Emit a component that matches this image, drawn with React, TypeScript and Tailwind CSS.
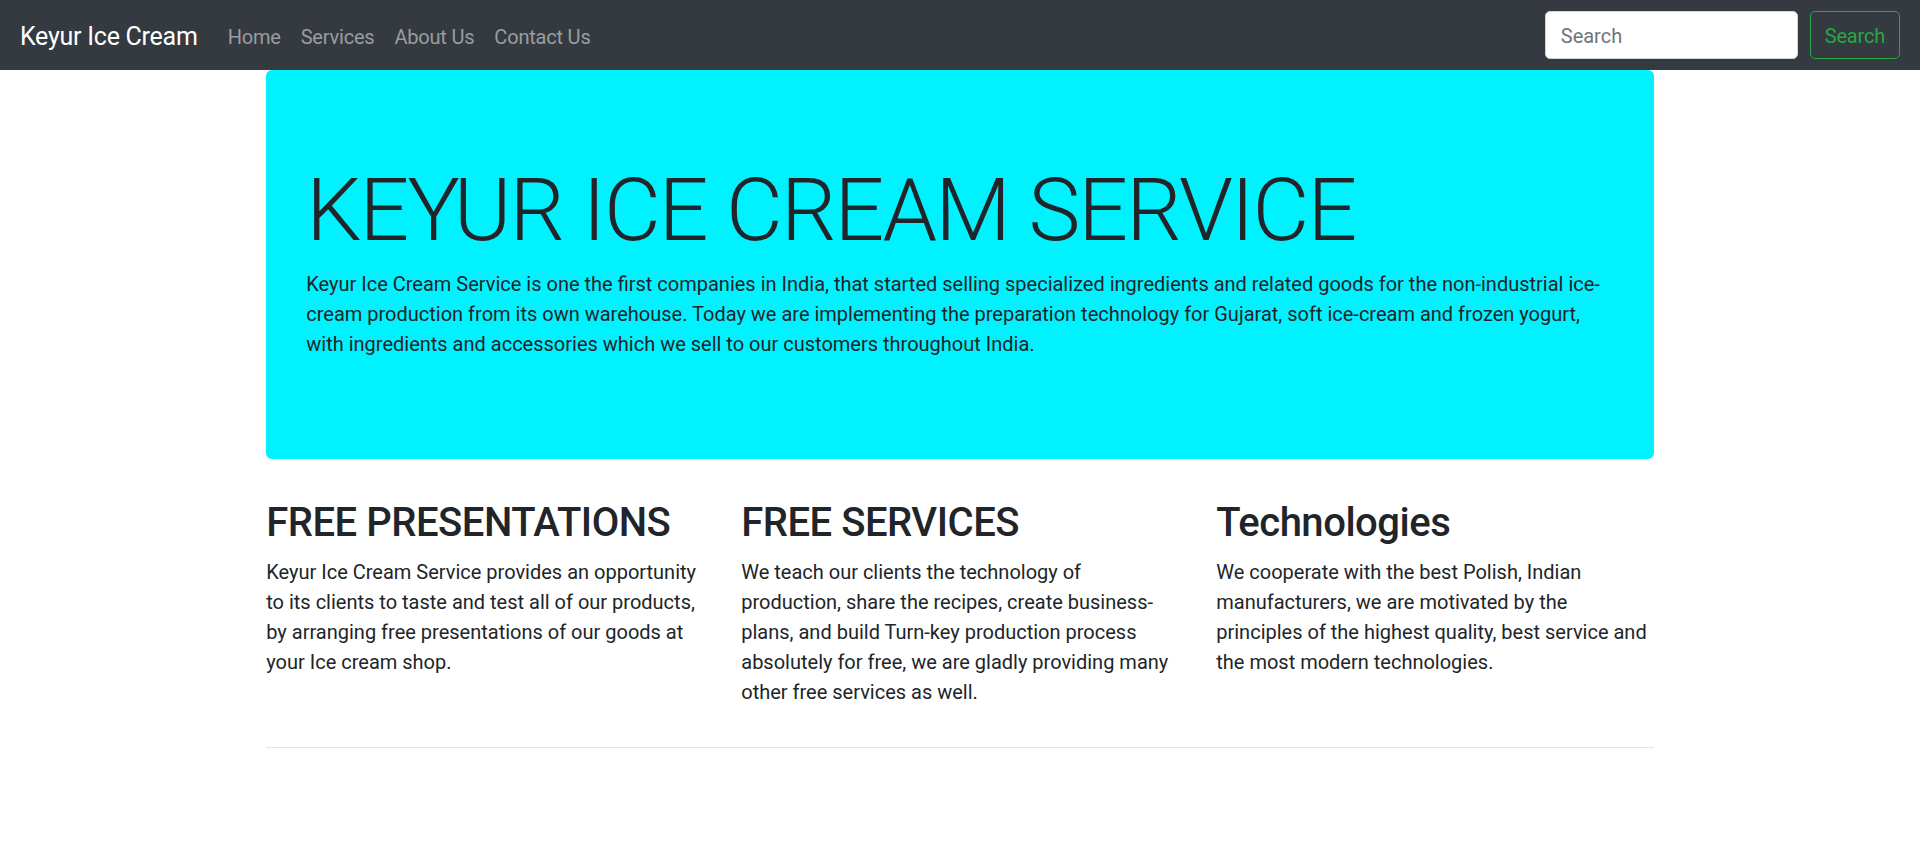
const features = [
  {
    title: "FREE PRESENTATIONS",
    body: "Keyur Ice Cream Service provides an opportunity to its clients to taste and test all of our products, by arranging free presentations of our goods at your Ice cream shop.",
  },
  {
    title: "FREE SERVICES",
    body: "We teach our clients the technology of production, share the recipes, create business-plans, and build Turn-key production process absolutely for free, we are gladly providing many other free services as well.",
  },
  {
    title: "Technologies",
    body: "We cooperate with the best Polish, Indian manufacturers, we are motivated by the principles of the highest quality, best service and the most modern technologies.",
  },
];

const links = ["Home", "Services", "About Us", "Contact Us"];

const App = () => {
  return (
    <div className="min-h-[842px] bg-white text-[20px] leading-[1.5] text-[#212529] font-['Segoe_UI',Roboto,'Helvetica_Neue',Arial,sans-serif]">
      {/* navbar */}
      <nav className="h-[70px] bg-[#343a40] px-5 flex items-center">
        <a className="text-white text-[25px] leading-[1.5] mr-5 pt-[3px] tracking-[-0.01em]">Keyur Ice Cream</a>
        <ul className="flex items-center pt-[3px]">
          {links.map((l) => (
            <li key={l}>
              <a className="px-[10px] py-[10px] text-white/50 tracking-[-0.01em]">{l}</a>
            </li>
          ))}
        </ul>
        <form className="ml-auto flex items-center">
          <input
            placeholder="Search"
            className="w-[253px] h-[47.5px] bg-white border border-[#ced4da] rounded-[5px] px-[15px] pt-[2px] text-[20px] text-[#495057] placeholder:text-[#6c757d] mr-3 outline-none"
          />
          <button
            type="button"
            className="h-[47.5px] px-[14px] pt-[2px] border border-[#28a745] rounded-[5px] text-[#28a745] text-[20px] tracking-[-0.01em]"
          >
            Search
          </button>
        </form>
      </nav>

      {/* content */}
      <div className="w-[1425px] mx-auto px-[18.75px]">
        <div className="bg-[#00f2ff] rounded-[6px] px-10 pt-[84px] pb-20 mb-10">
          <h1 className="text-[87.5px] font-light leading-[1.2] pt-[4px] mb-[6px] tracking-[-0.022em]">
            KEYUR ICE CREAM SERVICE
          </h1>
          <p className="mb-5">
            Keyur Ice Cream Service is one the first companies in India, that started selling specialized
            ingredients and related goods for the non-industrial ice-cream production from its own warehouse.
            Today we are implementing the preparation technology for Gujarat, soft ice-cream and frozen yogurt,
            with ingredients and accessories which we sell to our customers throughout India.
          </p>
        </div>

        <div className="grid grid-cols-3 -mx-[18.75px]">
          {features.map((f) => (
            <div key={f.title} className="px-[18.75px]">
              <h2 className="text-[40px] font-medium leading-[1.2] mb-[10px] tracking-[-0.012em]">{f.title}</h2>
              <p className="mb-5">{f.body}</p>
            </div>
          ))}
        </div>
        <hr className="mt-5 mb-5 border-t-[1.25px] border-black/10" />
      </div>
    </div>
  );
};

export default App;
